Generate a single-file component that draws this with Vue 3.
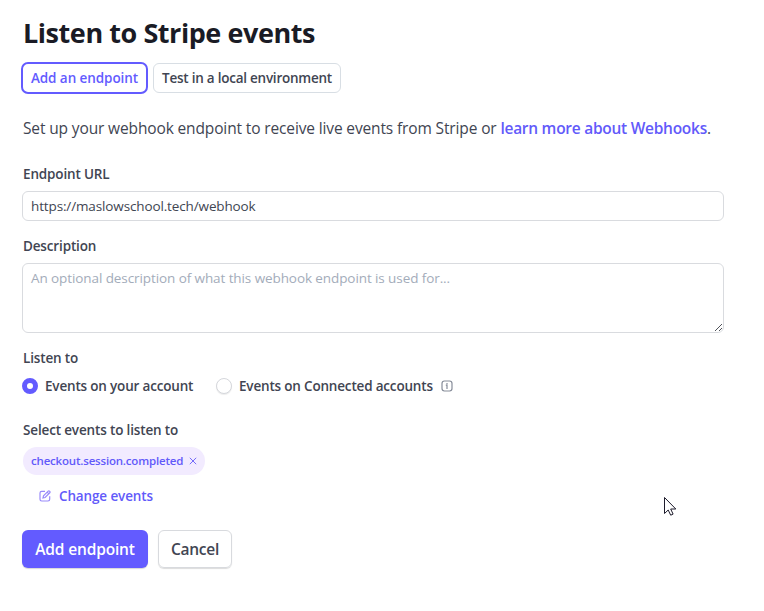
<script setup>
import { ref } from 'vue'

const url = ref('https://maslowschool.tech/webhook')
const description = ref('')
const scope = ref('account')
</script>

<template>
  <main class="page">
    <h1 class="title">Listen to Stripe events</h1>

    <div class="tabs">
      <button class="tab tab-active">Add an endpoint</button>
      <button class="tab">Test in a local environment</button>
    </div>

    <p class="intro">Set up your webhook endpoint to receive live events from Stripe or <a class="link">learn more about Webhooks</a><span class="stop">.</span></p>

    <label class="label" for="url">Endpoint URL</label>
    <input id="url" v-model="url" class="field" type="text" spellcheck="false" />

    <label class="label label-near" for="desc">Description</label>
    <div class="area-wrap">
      <textarea id="desc" v-model="description" class="field area" placeholder="An optional description of what this webhook endpoint is used for..."></textarea>
      <svg class="grip" width="9" height="9" viewBox="0 0 9 9"><path d="M1 8 8 1M5 8 8 5" /></svg>
    </div>

    <div class="label label-near">Listen to</div>
    <div class="radios">
      <label class="radio" @click="scope = 'account'">
        <span class="dot" :class="{ on: scope === 'account' }"></span>
        <span>Events on your account</span>
      </label>
      <label class="radio" @click="scope = 'connected'">
        <span class="dot" :class="{ on: scope === 'connected' }"></span>
        <span>Events on Connected accounts</span>
      </label>
      <svg class="info" width="12" height="12" viewBox="0 0 12 12">
        <rect x="1" y="1" width="10" height="10" rx="2.4" />
        <path d="M4.8 5.2H6V9M6 3v1.2" />
      </svg>
    </div>

    <div class="label">Select events to listen to</div>
    <div class="chip">
      <span>checkout.session.completed</span>
      <svg class="close" width="8" height="8" viewBox="0 0 8 8"><path d="m.8.8 6.4 6.4M7.2.8.8 7.2" /></svg>
    </div>

    <button class="change">
      <svg width="12" height="12" viewBox="0 0 12 12">
        <path d="M6 1.3H2.7A1.7 1.7 0 0 0 1 3v6.3A1.7 1.7 0 0 0 2.7 11H9a1.7 1.7 0 0 0 1.7-1.7V6.2" />
        <path d="m4 8 .5-2.1L9.2 1.2a.9.9 0 0 1 1.3 0l.3.3a.9.9 0 0 1 0 1.3L6.1 7.5ZM8.2 2.2l1.6 1.6" />
      </svg>
      <span>Change events</span>
    </button>

    <div class="actions">
      <button class="btn primary">Add endpoint</button>
      <button class="btn secondary">Cancel</button>
    </div>

    <svg class="cursor" width="14" height="21" viewBox="0 0 14 21">
      <path d="M1.5 1.5v16l3.7-3.5 2.5 5.2 2.4-1.1-2.4-5.1h5.1Z" />
    </svg>
  </main>
</template>

<style>
body {
  background: #fff;
}
</style>

<style scoped>
* {
  box-sizing: border-box;
}
.page {
  position: relative;
  display: flex;
  flex-direction: column;
  align-items: flex-start;
  height: 611px;
  padding: 14px 40px 0 22px;
  overflow: hidden;
  background: #fff;
  color: #414552;
  font-family: "Open Sans", "Noto Sans", sans-serif;
  font-size: 14px;
  line-height: 20px;
  white-space: nowrap;
}
button {
  font: inherit;
  color: inherit;
  margin: 0;
  padding: 0;
  background: none;
  border: 0;
}
.title {
  margin: 0 0 0 1px;
  color: #1a1b25;
  font-size: 27px;
  font-weight: 700;
  line-height: 38px;
  letter-spacing: -0.44px;
}
.tabs {
  display: flex;
  align-items: center;
  gap: 5px;
  margin: 10px 0 0 -1px;
}
.tab {
  display: flex;
  align-items: center;
  justify-content: center;
  width: 188px;
  height: 30px;
  border: 1px solid #d8dee4;
  border-radius: 6px;
  font-size: 13.5px;
  font-weight: 600;
  letter-spacing: -0.24px;
}
.tab-active {
  width: 127px;
  height: 32px;
  border: 2px solid #635bff;
  border-radius: 7px;
  color: #635bff;
  letter-spacing: -0.07px;
}
.intro {
  margin: 22px 0 0 1px;
  font-size: 15.5px;
  line-height: 24px;
  letter-spacing: -0.135px;
}
.link {
  color: #625afa;
  font-weight: 600;
  letter-spacing: -0.27px;
}
.label {
  margin: 24px 0 0 1px;
  font-size: 13.5px;
  font-weight: 600;
  line-height: 20px;
  letter-spacing: -0.15px;
}
.field {
  display: block;
  width: 702px;
  height: 30px;
  margin: 7px 0 0;
  padding: 0 8px;
  border: 1px solid #d9dbdf;
  border-radius: 6px;
  outline: 0;
  background: #fff;
  color: #414552;
  font: 13.5px/20px "Open Sans", "Noto Sans", sans-serif;
  letter-spacing: -0.13px;
}
.label-near {
  margin-top: 15px;
}
.area-wrap {
  position: relative;
}
.area {
  height: 70px;
  padding: 4px 8px;
  resize: none;
  letter-spacing: -0.09px;
}
.area::placeholder {
  color: #a3acba;
  opacity: 1;
}
.grip {
  position: absolute;
  right: 1px;
  bottom: 1px;
  fill: none;
  stroke: #50535a;
  stroke-width: 1;
}
.radios {
  display: flex;
  align-items: center;
  height: 20px;
  margin-top: 8px;
  font-size: 13.5px;
  font-weight: 600;
  letter-spacing: -0.18px;
}
.radio {
  display: flex;
  align-items: center;
  gap: 7px;
  width: 194px;
}
.radio + .radio {
  width: 225px;
}
.dot {
  flex: none;
  width: 16px;
  height: 16px;
  border: 1px solid #d5d7dc;
  border-radius: 50%;
  background: #fff;
  box-shadow: 0 1px 1px rgba(0, 0, 0, 0.08);
}
.dot.on {
  border: 5px solid #635bff;
  box-shadow: none;
}
.info {
  fill: none;
  stroke: #878d9a;
  stroke-width: 1.2;
}
.chip {
  display: flex;
  align-items: center;
  gap: 6px;
  width: 182px;
  height: 28px;
  margin: 7px 0 0 1px;
  padding-left: 8px;
  border-radius: 14px;
  background: #f2ebff;
  color: #625afa;
  font-size: 11.5px;
  font-weight: 600;
  letter-spacing: -0.19px;
}
.close {
  fill: none;
  stroke: #756cfa;
  stroke-width: 1;
}
.change {
  display: flex;
  align-items: center;
  gap: 8px;
  height: 20px;
  margin: 11px 0 0 17px;
  color: #625afa;
  font-size: 13.5px;
  font-weight: 600;
  letter-spacing: -0.13px;
}
.change svg {
  fill: none;
  stroke: #9a8bfa;
  stroke-width: 1.2;
}
.actions {
  display: flex;
  gap: 10px;
  margin-top: 24px;
}
.btn {
  display: flex;
  align-items: center;
  justify-content: center;
  height: 38px;
  border-radius: 6px;
  font-size: 15.5px;
  font-weight: 600;
  letter-spacing: -0.15px;
}
.primary {
  width: 126px;
  background: #635bff;
  color: #fff;
  box-shadow: 0 1px 1px rgba(0, 0, 0, 0.16);
}
.secondary {
  width: 74px;
  border: 1px solid #d8dade;
  box-shadow: 0 1px 1px rgba(0, 0, 0, 0.14);
  letter-spacing: -0.3px;
}
.cursor {
  position: absolute;
  left: 663px;
  top: 496px;
  fill: #fff;
  stroke: #1d1b2b;
  stroke-width: 1;
}
</style>
